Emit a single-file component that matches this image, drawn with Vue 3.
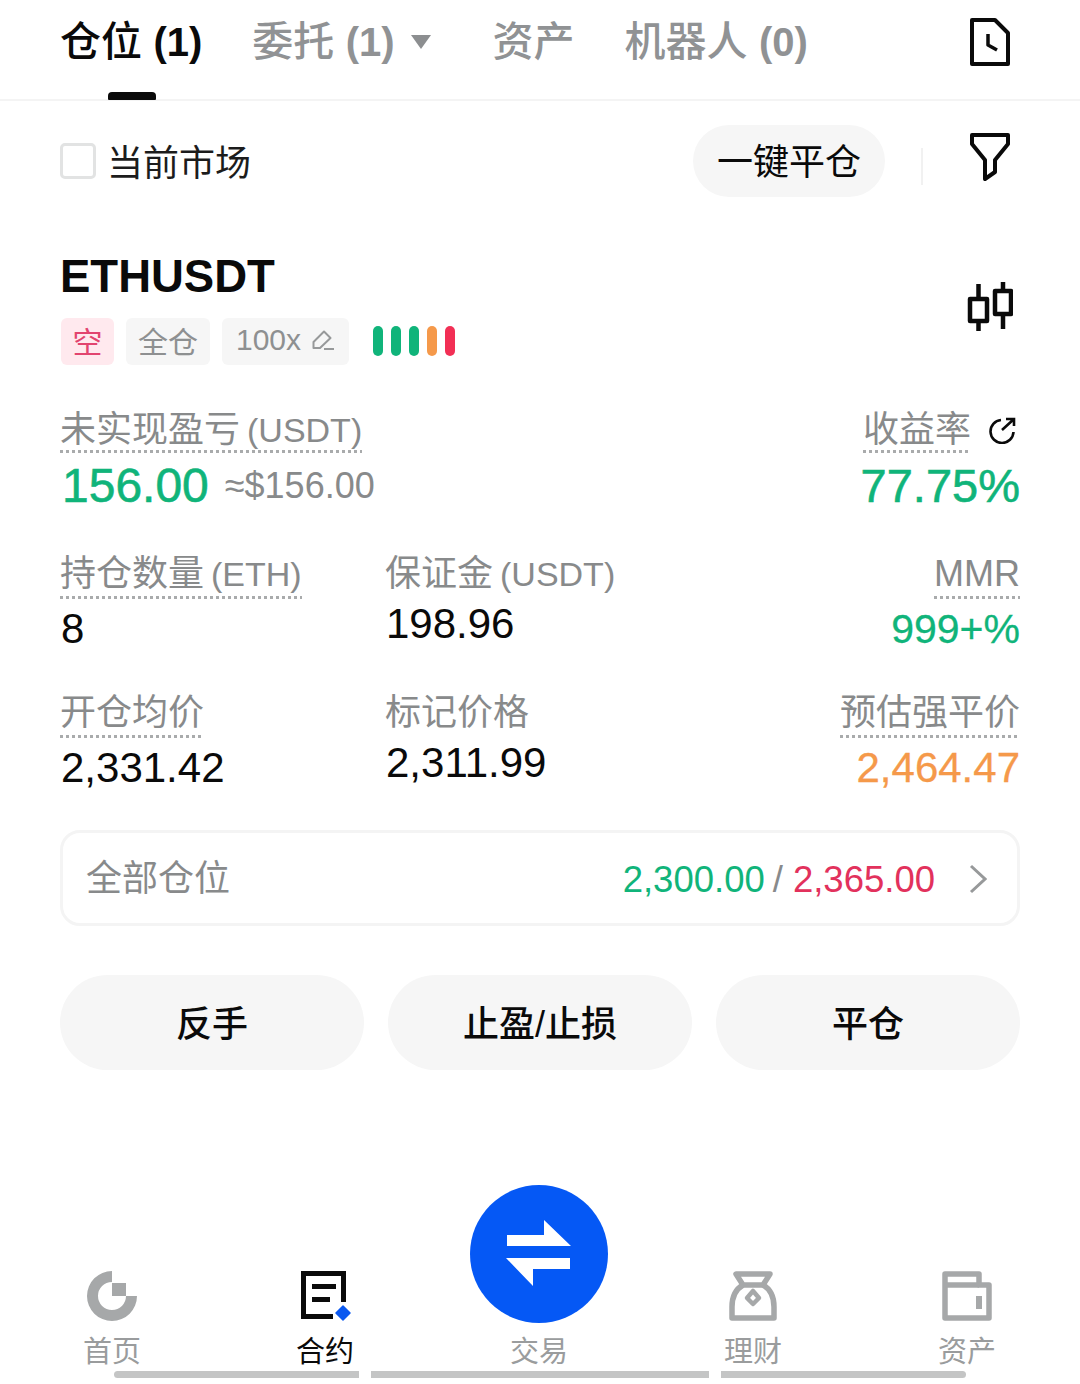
<template>
  <div class="page">
    <!-- 顶部标签 -->
    <header class="tabs">
      <div class="tab active">仓位 <b>(1)</b><i class="indicator"></i></div>
      <div class="tab tab-entrust"><span>委托 <b>(1)</b></span><span class="caret"></span></div>
      <div class="tab tab-assets">资产</div>
      <div class="tab tab-bot">机器人 <b>(0)</b></div>
      <svg class="history" width="40" height="48" viewBox="0 0 40 48" fill="none" stroke="#0a0a0a" stroke-width="4" stroke-linejoin="round">
        <path d="M2 2H25L38 15V46H2Z" />
        <path d="M18 16V27L27 32" stroke-width="3.5" />
      </svg>
    </header>

    <div class="toolbar">
      <label class="check"><span class="box"></span><span class="check-text">当前市场</span></label>
      <button class="close-all">一键平仓</button>
      <span class="divider"></span>
      <svg class="filter" width="40" height="48" viewBox="0 0 40 48" fill="none" stroke="#0a0a0a" stroke-width="4" stroke-linejoin="round">
        <path d="M2 2H38V11L25 27V39L15 46V27L2 11Z" />
      </svg>
    </div>

    <section class="position">
      <div class="head">
        <div>
          <h1 class="symbol">ETHUSDT</h1>
          <div class="tags">
            <span class="tag short">空</span>
            <span class="tag">全仓</span>
            <span class="tag lever">100x
              <svg width="22" height="20" viewBox="0 0 22 20" fill="none" stroke="#97999a" stroke-width="2">
                <path d="M1.500 18V12L12 1.500L18.500 8L8 18Z" stroke-linejoin="round" />
                <path d="M12 19H22" />
              </svg>
            </span>
            <span class="risk">
              <i v-for="(c, i) in riskBars" :key="i" :style="{ background: c }"></i>
            </span>
          </div>
        </div>
        <svg class="candles" width="46" height="50" viewBox="0 0 46 50" fill="none" stroke="#0a0a0a" stroke-width="4.5" stroke-linejoin="round">
          <rect x="3" y="17" width="17" height="22" />
          <path d="M11.500 2V17M11.500 39V49" />
          <rect x="28" y="9" width="16" height="23" />
          <path d="M36 0V9M36 32V47" />
        </svg>
      </div>

      <div class="row pnl">
        <div>
          <span class="label dotted">未实现盈亏<span class="unit">(USDT)</span></span>
          <div class="pnl-value"><span class="big green">156.00</span><span class="approx">≈$156.00</span></div>
        </div>
        <div class="right">
          <div class="roe">
            <span class="label dotted">收益率</span>
            <svg width="28" height="28" viewBox="0 0 28 28" fill="none" stroke="#0a0a0a" stroke-width="2.600">
              <path d="M13 4A11.500 11.500 0 1 0 25.500 16" />
              <path d="M14 14L26 3M18 3H26V10" />
            </svg>
          </div>
          <div class="big green roe-value">77.75%</div>
        </div>
      </div>

      <div class="row grid">
        <div v-for="item in stats" :key="item.label" :class="{ right: item.right }">
          <span class="label" :class="{ dotted: item.dotted }">{{ item.label }}<span v-if="item.unit" class="unit">{{ item.unit }}</span></span>
          <div class="value" :class="item.color">{{ item.value }}</div>
        </div>
      </div>

      <div class="all-pos">
        <span class="all-label">全部仓位</span>
        <span class="all-values"><em class="green">2,300.00</em><span class="slash">/</span><em class="red">2,365.00</em></span>
        <svg class="chevron" width="18" height="30" viewBox="0 0 18 30" fill="none" stroke="#97999a" stroke-width="3">
          <path d="M2 2L16 15L2 28" />
        </svg>
      </div>

      <div class="actions">
        <button>反手</button>
        <button>止盈/止损</button>
        <button>平仓</button>
      </div>
    </section>

    <!-- 底部导航 -->
    <nav class="nav">
      <div class="nav-item home">
        <svg width="50" height="50" viewBox="0 0 50 50">
          <path d="M25 0V11A14 14 0 1 0 39 25H50A25 25 0 1 1 25 0Z" fill="#a6a8a9" />
          <rect x="25" y="12" width="14" height="13" fill="#a6a8a9" />
        </svg>
        <span>首页</span>
      </div>
      <div class="nav-item current">
        <svg width="52" height="50" viewBox="0 0 52 50">
          <path d="M34 45.500H4.500V2.500H44.500V31" fill="none" stroke="#0a0a0a" stroke-width="5" />
          <path d="M13 15.500H37M13 28.500H31" stroke="#0a0a0a" stroke-width="5" />
          <path d="M44 35L51 42L44 49L37 42Z" fill="#0a58f0" stroke="#0a58f0" stroke-width="1.500" stroke-linejoin="round" />
        </svg>
        <span>合约</span>
      </div>
      <div class="nav-item">
        <div class="trade">
          <svg width="66" height="68" viewBox="0 0 66 68" fill="#fff">
            <path d="M1 15H38V0L65 26H1Z" />
            <path d="M0 38H64V49H27V66Z" />
          </svg>
        </div>
        <span>交易</span>
      </div>
      <div class="nav-item">
        <svg width="48" height="50" viewBox="0 0 48 50" fill="none" stroke="#a6a8a9" stroke-width="5.5" stroke-linejoin="round">
          <path d="M7 3H41L34 14H14Z" />
          <path d="M14 14C7 18 3 26 3 36V47H45V36C45 26 41 18 34 14" />
          <path d="M24 20L30 27L24 33L18 27Z" stroke-width="4.500" />
        </svg>
        <span>理财</span>
      </div>
      <div class="nav-item">
        <svg width="50" height="50" viewBox="0 0 50 50" fill="none" stroke="#a6a8a9" stroke-width="5.5">
          <path d="M3 3H37V14H47V47H3Z" stroke-linejoin="round" />
          <path d="M3 14H37" />
          <path d="M37 25V38" stroke-width="6" />
        </svg>
        <span>资产</span>
      </div>
    </nav>
    <div class="home-bar"><i></i><i></i><i></i></div>
  </div>
</template>

<script setup>
const riskBars = ['#10b47a', '#10b47a', '#10b47a', '#f5994a', '#f22f55']

const stats = [
  { label: '持仓数量', unit: '(ETH)', value: '8', dotted: true },
  { label: '保证金', unit: '(USDT)', value: '198.96' },
  { label: 'MMR', value: '999+%', dotted: true, right: true, color: 'green' },
  { label: '开仓均价', value: '2,331.42', dotted: true },
  { label: '标记价格', value: '2,311.99' },
  { label: '预估强平价', value: '2,464.47', dotted: true, right: true, color: 'orange' }
]
</script>

<style>
html,
body {
  margin: 0;
  background: #fff;
}
</style>

<style scoped>
.page {
  width: 1080px;
  height: 1384px;
  overflow: hidden;
  background: #fff;
  color: #0a0a0a;
  font-family: "Liberation Sans", "Noto Sans CJK SC", sans-serif;
}

.tabs {
  display: flex;
  align-items: center;
  height: 101px;
  padding: 0 70px 15px 60px;
  box-sizing: border-box;
  border-bottom: 2px solid #f4f4f4;
  color: #909294;
  font-size: 41px;
  font-weight: 500;
  line-height: 50px;
}

.tabs b {
  font-weight: 700;
  font-size: 40px;
}

.tab {
  position: relative;
  white-space: nowrap;
}

.tab.active {
  color: #0a0a0a;
}

.indicator {
  position: absolute;
  left: 48px;
  top: 75px;
  width: 48px;
  height: 8px;
  background: #0a0a0a;
  border-radius: 4px 4px 1px 1px;
}

.tab-entrust {
  margin-left: 50px;
  display: flex;
  align-items: center;
  gap: 16px;
}

.caret {
  width: 0;
  height: 0;
  border-left: 10px solid transparent;
  border-right: 10px solid transparent;
  border-top: 14px solid #8c8e90;
}

.tab-assets {
  margin-left: 62px;
}

.tab-bot {
  margin-left: 50px;
}

.history {
  margin-left: auto;
}

.toolbar {
  display: flex;
  align-items: center;
  height: 120px;
  padding: 0 70px 0 60px;
}

.check {
  display: flex;
  align-items: center;
  gap: 11px;
  font-size: 36px;
  color: #1c1c1c;
}

.check-text {
  padding-bottom: 2px;
}

.box {
  width: 36px;
  height: 36px;
  box-sizing: border-box;
  border: 3px solid #e2e3e3;
  border-radius: 5px;
}

.close-all {
  margin-left: auto;
  width: 192px;
  height: 72px;
  padding: 0 0 4px;
  border: 0;
  border-radius: 36px;
  background: #f6f6f6;
  color: #0a0a0a;
  font: inherit;
  font-size: 36px;
}

.divider {
  width: 2px;
  height: 37px;
  margin: 10px 47px 0 36px;
  background: #f1f1f1;
}

.filter {
  margin-bottom: 8px;
}

.position {
  padding: 0 60px;
}

.head {
  display: flex;
  justify-content: space-between;
  align-items: center;
  padding-top: 30px;
}

.candles {
  margin: 0 7px 0 0;
  position: relative;
  top: -1px;
}

.symbol {
  margin: 0;
  font-size: 45.5px;
  line-height: 52px;
  font-weight: 700;
}

.tags {
  display: flex;
  align-items: center;
  gap: 12px;
  margin-top: 15px;
  padding-left: 1px;
}

.tag {
  display: flex;
  align-items: center;
  gap: 11px;
  height: 47px;
  padding: 0 12px 3px;
  box-sizing: border-box;
  border-radius: 6px;
  background: #f6f6f6;
  color: #8e9091;
  font-size: 30px;
}

.tag.short {
  padding: 0 11.5px 3px;
  background: #ffe9ee;
  color: #e2446f;
}

.tag.lever {
  padding: 0 15px 3px 14px;
}

.risk {
  display: flex;
  gap: 8px;
  margin: 0 0 2px 12px;
}

.risk i {
  width: 10px;
  height: 30px;
  border-radius: 5px;
}

.row {
  color: #888a8b;
}

.pnl {
  display: flex;
  justify-content: space-between;
  margin-top: 45px;
}

.label {
  display: inline-block;
  color: #888a8b;
  font-size: 36px;
  line-height: 40px;
  white-space: nowrap;
}

.unit {
  margin-left: 7px;
  font-size: 34px;
}

.dotted {
  padding-bottom: 5px;
  background: linear-gradient(to right, #a9abac 50%, transparent 50%) left bottom / 6px 3px repeat-x;
}

.pnl .dotted {
  background-position: left bottom 2px;
}

.pnl-value {
  display: flex;
  align-items: center;
  gap: 16px;
  padding-left: 2px;
  line-height: 52px;
  margin-top: 5px;
}

.big {
  font-size: 48px;
  -webkit-text-stroke: 0.6px currentColor;
}

.approx {
  font-size: 36px;
  color: #888a8b;
}

.green {
  color: #10b47a;
}

.red {
  color: #e2315c;
}

.orange {
  color: #f5994a;
}

.right {
  text-align: right;
}

.roe {
  display: flex;
  align-items: flex-start;
  justify-content: flex-end;
  gap: 17px;
  padding-right: 4px;
}

.roe svg {
  margin-top: 6px;
}

.big.roe-value {
  font-size: 47px;
  line-height: 52px;
  margin-top: 5px;
}

.grid {
  display: grid;
  grid-template-columns: 325px 1fr 1fr;
  row-gap: 39px;
  margin-top: 42px;
}

.value {
  padding-left: 1px;
  color: #0a0a0a;
  font-size: 42px;
  line-height: 50px;
  margin-top: 5px;
}

.value.green,
.value.orange {
  -webkit-text-stroke: 0.3px currentColor;
}

.value.green {
  color: #10b47a;
  font-size: 41px;
}

.value.orange {
  color: #f5994a;
}

.all-pos {
  display: flex;
  align-items: center;
  height: 96px;
  box-sizing: border-box;
  margin-top: 37px;
  padding: 0 30px 0 23px;
  border: 3px solid #f4f4f4;
  border-radius: 20px;
}

.all-label {
  color: #888a8b;
  font-size: 36px;
  line-height: 40px;
  padding-top: 2px;
}

.all-values {
  margin-left: auto;
  margin-right: 34px;
  padding-top: 3px;
  font-size: 36.5px;
  line-height: 40px;
}

.all-values em {
  font-style: normal;
}

.slash {
  margin: 0 10px 0 8px;
  color: #888a8b;
}

.chevron {
  margin-top: 2px;
}

.actions {
  display: grid;
  grid-template-columns: repeat(3, 1fr);
  gap: 24px;
  margin-top: 49px;
}

.actions button {
  height: 95px;
  padding: 0 0 4px;
  border: 0;
  border-radius: 48px;
  background: #f6f6f6;
  color: #0a0a0a;
  font: inherit;
  font-size: 36px;
  font-weight: 500;
}

.nav {
  display: grid;
  grid-template-columns: repeat(5, 214px);
  padding: 0 0 0 4px;
  margin-top: 115px;
  align-items: end;
}

.nav-item {
  display: flex;
  flex-direction: column;
  align-items: center;
  color: #9a9c9d;
  font-size: 29px;
  line-height: 36px;
}

.nav-item.home {
  padding-left: 2px;
}

.nav-item > svg {
  margin-bottom: 2px;
}

.nav-item span {
  margin-top: 11px;
}

.nav-item.current {
  color: #0a0a0a;
}

.trade {
  display: flex;
  align-items: center;
  justify-content: center;
  width: 138px;
  height: 138px;
  border-radius: 50%;
  background: #0558f5;
}

.home-bar {
  display: flex;
  gap: 12px;
  margin: 1px 0 0 114px;
}

.home-bar i {
  height: 7px;
  width: 245px;
  background: #c4c5c5;
}

.home-bar i:first-child {
  border-radius: 4px 0 0 4px;
}

.home-bar i:nth-child(2) {
  width: 338px;
}

.home-bar i:last-child {
  border-radius: 0 4px 4px 0;
}
</style>
